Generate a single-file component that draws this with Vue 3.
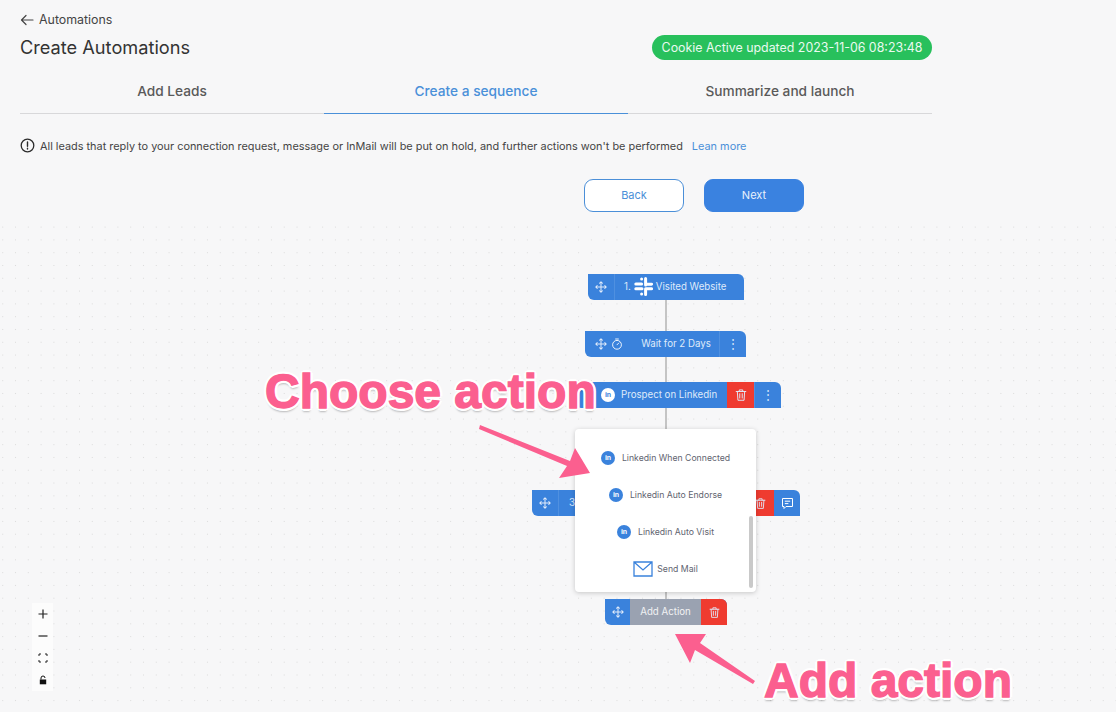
<script setup>
const tabs = [
  { label: "Add Leads", active: false },
  { label: "Create a sequence", active: true },
  { label: "Summarize and launch", active: false },
];

const menuItems = [
  { label: "Linkedin When Connected", icon: "in" },
  { label: "Linkedin Auto Endorse", icon: "in" },
  { label: "Linkedin Auto Visit", icon: "in" },
  { label: "Send Mail", icon: "mail" },
];
</script>

<template>
  <div class="page">
    <svg class="defs" width="0" height="0">
      <defs>
        <symbol id="move" viewBox="0 0 16 16">
          <path d="M8 1v14M1 8h14M6 3l2-2 2 2M6 13l2 2 2-2M3 6 1 8l2 2M13 6l2 2-2 2" fill="none" stroke="currentColor" stroke-width="1.4" stroke-linecap="round" stroke-linejoin="round" />
        </symbol>
        <symbol id="trash" viewBox="0 0 16 16">
          <path d="M2.5 4h11M6 4V2.2h4V4M3.8 4l.7 10h7l.7-10M6.6 6.5v5M9.4 6.5v5" fill="none" stroke="currentColor" stroke-width="1.1" stroke-linecap="round" stroke-linejoin="round" />
        </symbol>
        <symbol id="linkedin" viewBox="0 0 16 16">
          <circle cx="8" cy="8" r="8" fill="currentColor" />
          <text x="8" y="10.8" text-anchor="middle" font-family="'Liberation Sans', sans-serif" font-size="8" font-weight="700" fill="var(--in-fg)">in</text>
        </symbol>
      </defs>
    </svg>

    <header class="top">
      <div class="crumb">
        <svg width="14" height="12" viewBox="0 0 14 12"><path d="M13 6H1.5M6 1.5 1.5 6 6 10.5" fill="none" stroke="#444" stroke-width="1.2" stroke-linecap="round" stroke-linejoin="round" /></svg>
        <span>Automations</span>
      </div>
      <div class="title-row">
        <h1>Create Automations</h1>
        <span class="cookie">Cookie Active updated 2023-11-06 08:23:48</span>
      </div>
      <div class="tabs">
        <div v-for="tab in tabs" :key="tab.label" class="tab" :class="{ active: tab.active }">{{ tab.label }}</div>
      </div>
      <p class="notice">
        <svg width="15" height="15" viewBox="0 0 15 15"><circle cx="7.5" cy="7.5" r="6.3" fill="none" stroke="#2b2b2b" stroke-width="1.3" /><path d="M7.5 4v4.2M7.5 10.2v.9" stroke="#2b2b2b" stroke-width="1.4" stroke-linecap="round" /></svg>
        <span>All leads that reply to your connection request, message or InMail will be put on hold, and further actions won't be performed</span>
        <a class="learn">Lean more</a>
      </p>
      <div class="actions">
        <button class="btn back">Back</button>
        <button class="btn next">Next</button>
      </div>
    </header>

    <main class="canvas">
      <div class="line" style="top: 75px; height: 32px"></div>
      <div class="line" style="top: 132px; height: 26px"></div>
      <div class="line" style="top: 183px; height: 22px"></div>
      <div class="line" style="top: 365px; height: 10px"></div>

      <div class="node n1">
        <span class="cell move"><svg width="12" height="12"><use href="#move" /></svg></span>
        <span class="body">
          1.
          <svg class="slack" width="19" height="19" viewBox="0 0 19 19">
            <g fill="none" stroke="#fff" stroke-width="3" stroke-linecap="round">
              <path d="M1.8 7H7.6M7.6 2v.1M11.6 1.6V8M11.6 7.2h6M1.8 11.8H8M7.6 17v-.1M11.6 11.8h6M11.6 11.8v5.6" />
            </g>
          </svg>
          Visited Website
        </span>
      </div>

      <div class="node n2">
        <span class="cell wait-icons">
          <svg width="12" height="12"><use href="#move" /></svg>
          <svg width="12" height="12" viewBox="0 0 12 12"><circle cx="6" cy="6.8" r="4.4" fill="none" stroke="#fff" stroke-width=".9" /><path d="M4.6 1h2.8M6 6.8l1.8-1.8" stroke="#fff" stroke-width=".9" stroke-linecap="round" /></svg>
        </span>
        <span class="body">Wait for 2 Days</span>
        <span class="cell more">⋮</span>
      </div>

      <div class="node n3">
        <span class="body prospect">
          <svg class="in-white" width="14" height="14"><use href="#linkedin" /></svg>
          Prospect on Linkedin
        </span>
        <span class="cell red"><svg width="14" height="14"><use href="#trash" /></svg></span>
        <span class="cell more">⋮</span>
      </div>

      <div class="node n4">
        <span class="cell move"><svg width="12" height="12"><use href="#move" /></svg></span>
        <span class="body left">3</span>
        <span class="cell red"><svg width="13" height="13"><use href="#trash" /></svg></span>
        <span class="cell chat">
          <svg width="13" height="13" viewBox="0 0 13 13"><path d="M1.5 1.5h10v8H5l-2 2v-2H1.5zM3.8 4.2h5.4M3.8 6.6h3.6" fill="none" stroke="#fff" stroke-width="1" stroke-linejoin="round" /></svg>
        </span>
      </div>

      <div class="menu">
        <div v-for="item in menuItems" :key="item.label" class="menu-item" :class="{ mail: item.icon === 'mail' }">
          <svg v-if="item.icon === 'in'" class="in-blue" width="14" height="14"><use href="#linkedin" /></svg>
          <svg v-else width="20" height="16" viewBox="0 0 20 16"><path d="M1 1h18v14H1zM1 1l9 8 9-8" fill="none" stroke="#3a82dc" stroke-width="1.3" /></svg>
          <span>{{ item.label }}</span>
        </div>
        <div class="scrollbar"></div>
      </div>

      <div class="node n5">
        <span class="cell move"><svg width="12" height="12"><use href="#move" /></svg></span>
        <span class="body grey">Add Action</span>
        <span class="cell red"><svg width="13" height="13"><use href="#trash" /></svg></span>
      </div>

      <div class="controls">
        <button>
          <svg width="10" height="10" viewBox="0 0 10 10"><path d="M5 .5v9M.5 5h9" stroke="#222" stroke-width="1.2" /></svg>
        </button>
        <button>
          <svg width="10" height="10" viewBox="0 0 10 10"><path d="M.5 5h9" stroke="#222" stroke-width="1.2" /></svg>
        </button>
        <button>
          <svg width="10" height="10" viewBox="0 0 10 10"><path d="M1 3V1h2M7 1h2v2M9 7v2H7M3 9H1V7" fill="none" stroke="#222" stroke-width="1" /></svg>
        </button>
        <button>
          <svg width="10" height="10" viewBox="0 0 10 10"><path d="M3 4.5V3a2 2 0 0 1 4 0" fill="none" stroke="#111" stroke-width="1" /><rect x="1.8" y="4.5" width="6.4" height="4.8" fill="#111" /></svg>
        </button>
      </div>

      <svg class="arrows" width="1116" height="487" viewBox="0 225 1116 487">
        <polygon points="480,425 479,429 567,466 559,478 590,473 575,448 570,461" fill="#fb5f8f" />
        <polygon points="675,634 706,634 700,643 755,681 753,684 695,650 690,663" fill="#fb5f8f" />
      </svg>

      <div class="callout choose">Choose action</div>
      <div class="callout add">Add action</div>
    </main>
  </div>
</template>

<style>
html,
body {
  margin: 0;
  background: #f7f7f8;
}
</style>

<style scoped>
.page {
  width: 1116px;
  height: 712px;
  overflow: hidden;
  background: #f7f7f8;
  font-family: Inter, "Liberation Sans", sans-serif;
  color: #444;
}

.defs {
  position: absolute;
}

.top {
  height: 225px;
  box-sizing: border-box;
  width: 932px;
  padding: 12px 0 0 20px;
}

.crumb {
  display: flex;
  align-items: center;
  gap: 5px;
  height: 15px;
  font-size: 12.4px;
  color: #444;
}

.title-row {
  display: flex;
  justify-content: space-between;
  align-items: center;
  height: 26px;
  margin-top: 7px;
}

h1 {
  margin: 0;
  font-size: 18.2px;
  font-weight: 400;
  color: #333;
}

.cookie {
  box-sizing: border-box;
  width: 280px;
  height: 25px;
  margin-top: 1px;
  border-radius: 13px;
  background: #28c05c;
  color: #eafaf0;
  font-size: 12.4px;
  line-height: 25px;
  text-align: center;
  white-space: nowrap;
}

.tabs {
  display: grid;
  grid-template-columns: repeat(3, 1fr);
  margin-top: 12px;
}

.tab {
  height: 41px;
  border-bottom: 1px solid #d8d8da;
  font-size: 13.7px;
  font-weight: 500;
  line-height: 38px;
  text-align: center;
  color: #5a5a5a;
}

.tab.active {
  color: #4a90d9;
  border-bottom-color: #4a90d9;
}

.notice {
  display: flex;
  align-items: center;
  gap: 5px;
  margin: 24px 0 0;
  height: 15px;
  font-size: 10.9px;
  color: #444;
  white-space: nowrap;
}

.learn {
  margin-left: 4px;
  color: #4a90d9;
}

.actions {
  display: flex;
  gap: 20px;
  margin: 26px 0 0 564px;
}

.btn {
  width: 100px;
  height: 33px;
  border-radius: 9px;
  font-family: inherit;
  font-size: 11px;
  padding: 0 0 2px;
}

.back {
  background: #fff;
  border: 1px solid #4b8fd8;
  color: #4b8fd8;
}

.next {
  background: #3a82e0;
  border: 1px solid #3a82e0;
  color: #e8f1fc;
}

.canvas {
  position: relative;
  width: 1116px;
  height: 487px;
  background-image: radial-gradient(circle, #dcdcdc 0.7px, transparent 1px);
  background-size: 12.8px 12.8px;
  background-position: -3.7px -4.3px;
}

.line {
  position: absolute;
  left: 665px;
  width: 2px;
  background: #c4c4c4;
}

.node {
  position: absolute;
  display: flex;
  height: 26px;
  background: #3a82dc;
  color: #dfeafa;
  font-size: 9.7px;
  line-height: 26px;
  border-radius: 0 6px 0 6px;
  white-space: nowrap;
}

.cell {
  display: flex;
  align-items: center;
  justify-content: center;
  flex: none;
}

.move {
  width: 26px;
  border-right: 1px solid #4f90e0;
}

.body {
  display: flex;
  flex: 1;
  align-items: center;
  justify-content: center;
  gap: 3px;
  padding-bottom: 1px;
  box-sizing: border-box;
}

.n1 {
  left: 588px;
  top: 49px;
  width: 156px;
}

.n1 .body {
  justify-content: flex-start;
  padding-left: 9px;
}

.n2 {
  left: 585px;
  top: 106px;
  width: 161px;
}

.wait-icons {
  gap: 4px;
  width: 48px;
}

.more {
  width: 26px;
  border-left: 1px solid #4f90e0;
  font-size: 12px;
  color: #d6e6fa;
}

.n3 {
  left: 575px;
  top: 157px;
  width: 206px;
}

.prospect {
  justify-content: flex-start;
  gap: 6px;
  padding-left: 26px;
}

.in-white {
  color: #fff;
  --in-fg: #3a82dc;
}

.in-blue {
  color: #3a82dc;
  --in-fg: #fff;
}

.red {
  width: 27px;
  background: #ef3b30;
}

.n4 {
  left: 532px;
  top: 265px;
  width: 268px;
}

.left {
  justify-content: flex-start;
  padding-left: 10px;
}

.chat {
  width: 26px;
}

.menu {
  position: absolute;
  left: 575px;
  top: 204px;
  box-sizing: border-box;
  width: 181px;
  height: 163px;
  padding-top: 10px;
  background: #fff;
  border-radius: 4px;
  box-shadow: 0 1px 5px rgba(0, 0, 0, 0.2);
}

.menu-item {
  display: flex;
  align-items: center;
  justify-content: center;
  gap: 7px;
  height: 37px;
  font-size: 8.7px;
  color: #5f6470;
}

.menu-item.mail {
  gap: 4px;
}

.scrollbar {
  position: absolute;
  right: 3px;
  top: 87px;
  width: 4px;
  height: 72px;
  border-radius: 2px;
  background: #c9c9c9;
}

.n5 {
  left: 605px;
  top: 374px;
  width: 122px;
  overflow: hidden;
}

.n5 .move {
  width: 25px;
  border-right: 0;
}

.grey {
  background: #9aa2b1;
  color: #f1f2f4;
}

.n5 .red {
  width: 26px;
}

.controls {
  position: absolute;
  left: 32px;
  top: 378px;
  display: flex;
  flex-direction: column;
  width: 21px;
  background: #fcfcfc;
}

.controls button {
  display: flex;
  align-items: center;
  justify-content: center;
  width: 21px;
  height: 22px;
  padding: 0;
  border: 0;
  background: none;
}

.arrows {
  position: absolute;
  left: 0;
  top: 0;
  pointer-events: none;
}

.callout {
  position: absolute;
  font-family: "Liberation Sans", Arial, sans-serif;
  font-size: 48px;
  font-weight: 700;
  line-height: 54px;
  color: #fb5f8f;
  white-space: nowrap;
  -webkit-text-stroke: 1.4px #fb5f8f;
  text-shadow:
    3px 0 0 #fff,
    -3px 0 0 #fff,
    0 3px 0 #fff,
    0 -3px 0 #fff,
    2px 2px 0 #fff,
    -2px 2px 0 #fff,
    2px -2px 0 #fff,
    -2px -2px 0 #fff,
    0 4px 2px rgba(0, 0, 0, 0.25);
}

.choose {
  left: 265px;
  top: 140px;
}

.add {
  left: 764px;
  top: 429px;
}
</style>
